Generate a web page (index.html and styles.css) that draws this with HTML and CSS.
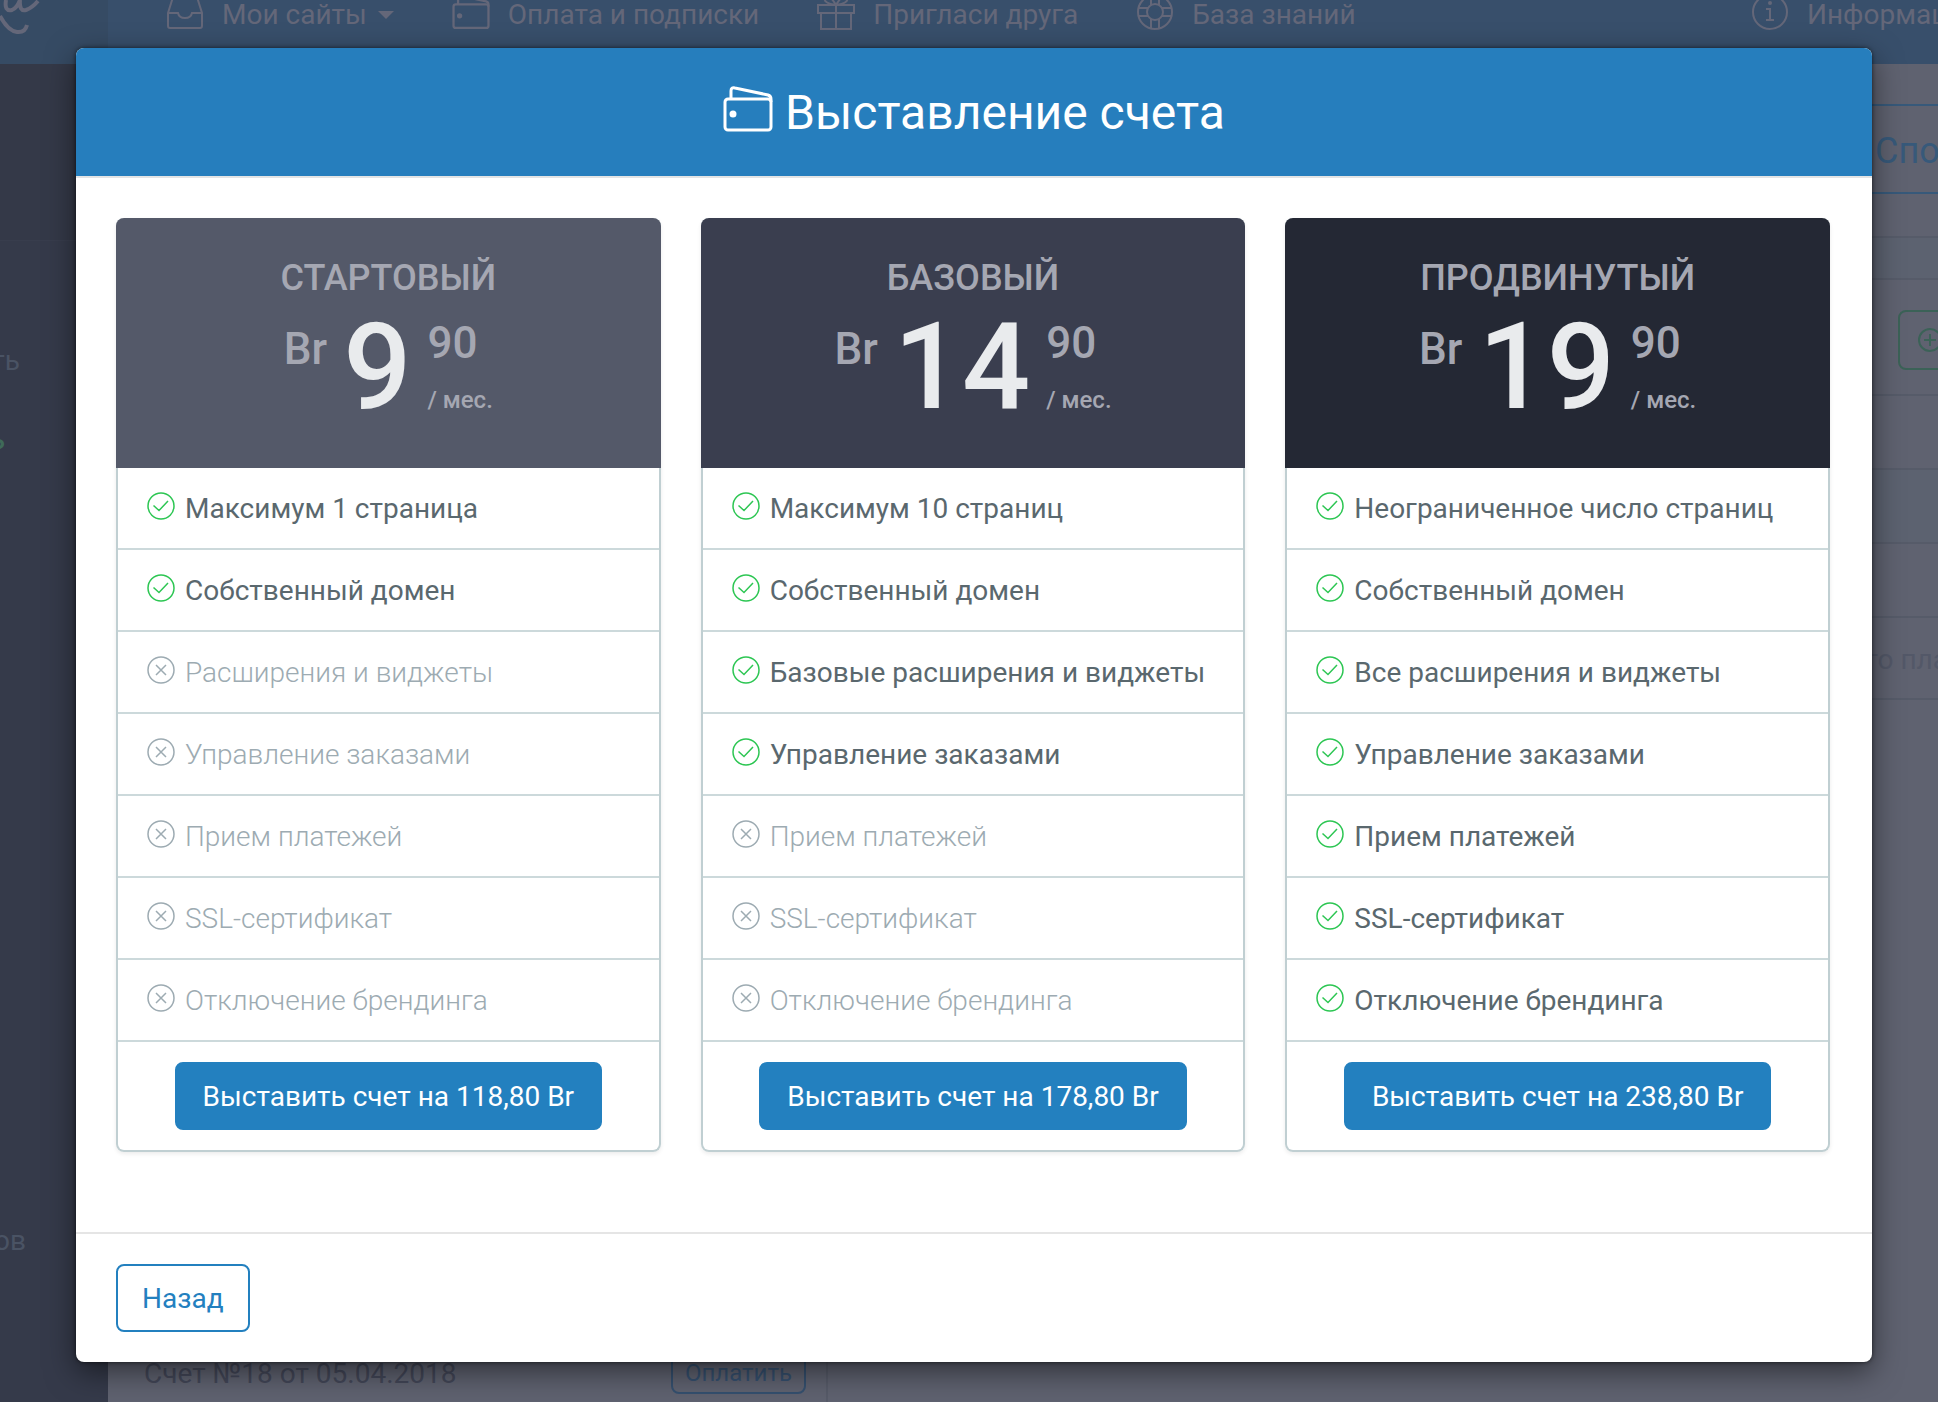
FILE: index.html
```html
<!DOCTYPE html>
<html lang="ru">
<head>
<meta charset="utf-8">
<title>Выставление счета</title>
<link rel="stylesheet" href="styles.css">
</head>
<body>
<svg class="sprite" aria-hidden="true">
  <symbol id="check" viewBox="0 0 28 28"><circle cx="14" cy="14" r="13"/><path d="M6.500 13.500l5.500 5L21 9"/></symbol>
  <symbol id="cross" viewBox="0 0 28 28"><circle cx="14" cy="14" r="13"/><path d="M9 9l10 10M19 9L9 19"/></symbol>
  <symbol id="wallet" viewBox="0 0 50 46"><rect x="2" y="13" width="46" height="31" rx="3"/><path d="M8 13V5q0-4 4-3L45 9q3 1 3 4v3"/><circle class="dot" cx="10" cy="28" r="2"/></symbol>
</svg>

<div class="page" aria-hidden="true">
  <header class="topbar">
    <div class="logo"><svg viewBox="0 0 108 64"><path d="M0 16q8 15 17 16q8 1 10-7M6 0q-2 12 6 10q5-2 8-10q-1 12 6 10q6-2 12-9"/></svg></div>
    <nav class="nav">
      <a href="#"><svg class="nav-icon" viewBox="0 0 38 36"><path d="M2 16L7 0h24l5 16v13q0 2-2 2H4q-2 0-2-2zh10q1 5 7 5t7-5h10"/></svg>Мои сайты<span class="caret"></span></a>
      <a href="#"><svg class="nav-icon wallet"><use href="#wallet"/></svg>Оплата и подписки</a>
      <a href="#"><svg class="nav-icon" viewBox="0 0 38 36"><path d="M1 8h36v8H1zM4 16v16h30V16M19 8v24M19 8Q6 6 8 1q4-5 11 7q7-12 11-7q2 5-11 7"/></svg>Пригласи друга</a>
      <a href="#"><svg class="nav-icon" viewBox="0 0 38 36"><circle cx="19" cy="15" r="17"/><circle cx="19" cy="15" r="8"/><path d="M15-2V8M23-2V8M15 22v10M23 22v10M2 11h10M2 19h10M26 11h10M26 19h10"/></svg>База знаний</a>
      <a class="info" href="#"><svg class="nav-icon" viewBox="0 0 38 36"><circle cx="19" cy="15" r="17"/><path d="M15 12h4v11M15 23h8"/><circle class="dot" cx="19" cy="6" r="1"/></svg>Информация</a>
    </nav>
  </header>
  <div class="workspace">
    <aside class="sidebar">
      <span class="side-top"></span>
      <span class="side-link">Создать</span>
      <span class="side-link side-active">Оплатить</span>
      <span class="side-link side-last">Заказов</span>
    </aside>
    <main class="invoices">
      <div class="invoice">Счет №18 от 05.04.2018</div>
      <button class="pay" type="button" tabindex="-1">Оплатить</button>
    </main>
    <section class="panel">
      <div class="tab">Способы</div>
      <div class="strip"></div>
      <div class="add"><button type="button" tabindex="-1"><svg viewBox="0 0 28 28"><circle cx="14" cy="14" r="11"/><path d="M14 8v12M8 14h12"/></svg></button></div>
      <div class="line"></div>
      <div class="line shade"></div>
      <div class="line"></div>
      <div class="line note">го платежа</div>
    </section>
  </div>
</div>

<div class="modal" role="dialog" aria-modal="true" aria-labelledby="title">
  <header class="modal-head">
    <svg class="title-icon"><use href="#wallet"/></svg>
    <h1 id="title">Выставление счета</h1>
  </header>
  <div class="plans">
    <section class="plan start">
      <header><h2>Стартовый</h2><div class="price"><span class="cur">Br</span><span class="whole">9</span><span class="part"><span class="cents">90</span><span class="per">/ мес.</span></span></div></header>
      <ul>
        <li><svg><use href="#check"/></svg>Максимум 1 страница</li>
        <li><svg><use href="#check"/></svg>Собственный домен</li>
        <li class="off"><svg><use href="#cross"/></svg>Расширения и виджеты</li>
        <li class="off"><svg><use href="#cross"/></svg>Управление заказами</li>
        <li class="off"><svg><use href="#cross"/></svg>Прием платежей</li>
        <li class="off"><svg><use href="#cross"/></svg>SSL-сертификат</li>
        <li class="off"><svg><use href="#cross"/></svg>Отключение брендинга</li>
      </ul>
      <footer><button class="btn btn-wide" type="button">Выставить счет на 118,80 Br</button></footer>
    </section>
    <section class="plan base">
      <header><h2>Базовый</h2><div class="price"><span class="cur">Br</span><span class="whole">14</span><span class="part"><span class="cents">90</span><span class="per">/ мес.</span></span></div></header>
      <ul>
        <li><svg><use href="#check"/></svg>Максимум 10 страниц</li>
        <li><svg><use href="#check"/></svg>Собственный домен</li>
        <li><svg><use href="#check"/></svg>Базовые расширения и виджеты</li>
        <li><svg><use href="#check"/></svg>Управление заказами</li>
        <li class="off"><svg><use href="#cross"/></svg>Прием платежей</li>
        <li class="off"><svg><use href="#cross"/></svg>SSL-сертификат</li>
        <li class="off"><svg><use href="#cross"/></svg>Отключение брендинга</li>
      </ul>
      <footer><button class="btn btn-wide" type="button">Выставить счет на 178,80 Br</button></footer>
    </section>
    <section class="plan pro">
      <header><h2>Продвинутый</h2><div class="price"><span class="cur">Br</span><span class="whole">19</span><span class="part"><span class="cents">90</span><span class="per">/ мес.</span></span></div></header>
      <ul>
        <li><svg><use href="#check"/></svg>Неограниченное число страниц</li>
        <li><svg><use href="#check"/></svg>Собственный домен</li>
        <li><svg><use href="#check"/></svg>Все расширения и виджеты</li>
        <li><svg><use href="#check"/></svg>Управление заказами</li>
        <li><svg><use href="#check"/></svg>Прием платежей</li>
        <li><svg><use href="#check"/></svg>SSL-сертификат</li>
        <li><svg><use href="#check"/></svg>Отключение брендинга</li>
      </ul>
      <footer><button class="btn btn-wide" type="button">Выставить счет на 238,80 Br</button></footer>
    </section>
  </div>
  <footer class="modal-foot"><button class="btn btn-outline" type="button">Назад</button></footer>
</div>
</body>
</html>
```
FILE: styles.css
```css
* { box-sizing: border-box; }
html, body { height: 100%; }
body { margin: 0; overflow: hidden; background: #5f6270; font: 400 28px/40px Roboto, sans-serif; }
svg { fill: none; stroke: currentColor; stroke-width: 2; flex: none; }
svg .dot { fill: currentColor; }
h1, h2, ul { margin: 0; padding: 0; }
ul { list-style: none; }
button { font: inherit; }
.sprite { position: absolute; width: 0; height: 0; }

/* Page under the dialog, already dimmed */
.page { display: flex; flex-direction: column; height: 100%; overflow: hidden; }
.topbar { display: flex; height: 64px; flex: none; background: #384f6b; color: #646779; }
.logo { width: 108px; flex: none; background: #364b64; }
.logo svg { display: block; width: 108px; height: 64px; stroke-width: 4; }
.nav { display: flex; flex: 1; align-items: flex-start; gap: 58px; padding-left: 58px; line-height: 30px; white-space: nowrap; }
.nav a { display: flex; align-items: center; flex: none; gap: 18px; color: inherit; text-decoration: none; }
.nav-icon { width: 38px; height: 36px; margin: -6px 0; overflow: visible; }
.nav .nav-icon { align-self: flex-start; margin-top: -3px; }
.nav .wallet { margin-top: -6px; stroke-width: 3; }
.caret { border: 8px solid transparent; border-top-color: currentColor; border-bottom: 0; margin-left: -7px; }
.nav .info { width: 187px; margin-left: auto; }
.workspace { display: flex; flex: 1; }
.sidebar { width: 108px; flex: none; display: flex; flex-direction: column; align-items: flex-start; background: #353a4a; color: #4a5364; }
.side-top { width: 100%; height: 177px; border-bottom: 1px solid #383d4d; background: #343948; }
.side-link { width: 20px; margin-top: 100px; display: flex; justify-content: flex-end; }
.side-active { width: 5px; margin-top: 39px; color: #3f6a59; font-weight: 500; }
.side-last { width: 26px; margin-top: 761px; }
.invoices { display: flex; align-items: flex-end; justify-content: space-between; flex: none; width: 720px; padding: 0 20px 8px 36px; border-right: 2px solid #575b69; color: #434758; }
.pay { height: 60px; padding: 18px 12px 0; border: 2px solid #35506f; border-radius: 8px; background: none; color: #35506f; font-size: 24px; line-height: 28px; }
.panel { flex: 1; min-width: 0; padding-top: 40px; }
.panel > * { padding-left: 1038px; white-space: nowrap; overflow: hidden; }
.tab { height: 90px; border: solid #37597a; border-width: 2px 0; font-size: 36px; line-height: 90px; color: #37597a; }
.panel .tab { padding-left: 1047px; }
.strip { height: 44px; margin-top: 42px; border: solid #565b69; border-width: 2px 0; background: #5c6270; }
.add { height: 116px; padding-top: 30px; border-bottom: 2px solid #565b69; }
.panel .add { padding-left: 1070px; }
.add button { width: 180px; height: 60px; padding: 0 16px; border: 2px solid #3b6257; border-radius: 8px; background: none; color: #3b6257; text-align: left; }
.add svg { display: block; width: 28px; height: 28px; }
.line { height: 74px; border-bottom: 2px solid #565b69; }
.shade { background: #5c6270; }
.note { height: 82px; line-height: 84px; color: #535868; }

/* Dialog */
.modal { position: absolute; top: 48px; left: 76px; right: 66px; border-radius: 8px; background: #fff; box-shadow: 0 10px 30px rgba(0, 0, 0, .5), 0 0 4px rgba(0, 0, 0, .6); overflow: hidden; }
.modal-head { display: flex; align-items: center; justify-content: center; gap: 12px; height: 130px; padding-top: 2px; border-bottom: 2px solid #e2e4e5; background: #267ebd; color: #fff; }
.title-icon { width: 50px; height: 46px; margin-bottom: 8px; stroke-width: 3; }
h1 { font-size: 48px; font-weight: 400; line-height: 60px; }
.plans { display: grid; grid-template-columns: repeat(3, 1fr); gap: 40px; padding: 40px 42px 80px 40px; }
.plan { border-radius: 8px; border: 2px solid #c0cfd2; border-top: 0; box-shadow: 0 2px 4px rgba(0, 0, 0, .08); }
.plan header { height: 250px; margin: 0 -2px; padding-top: 36px; border-radius: 8px 8px 0 0; text-align: center; color: #a5a7b2; font-weight: 500; }
.start header { background: #545969; }
.base header { background: #3a3e4f; }
.pro header { background: #242834; }
h2 { font-size: 36px; font-weight: 500; line-height: 48px; text-transform: uppercase; }
.price { display: flex; justify-content: center; margin-top: 1px; }
.cur { margin-top: 20px; font-size: 44px; line-height: 52px; }
.whole { margin: 0 16px; color: #e9ebed; font-size: 120px; line-height: 128px; }
.part { display: flex; flex-direction: column; text-align: left; }
.cents { margin-top: 14px; font-size: 44px; line-height: 52px; }
.per { margin-top: 15px; font-size: 24px; line-height: 32px; }
.plan li { display: flex; align-items: center; gap: 10px; height: 82px; padding: 2px 0 0 29px; border-bottom: 2px solid #ccd9db; color: #5a686e; white-space: nowrap; }
.plan li svg { width: 28px; height: 28px; margin-bottom: 6px; color: #2dc653; stroke-width: 1.5; }
.plan .off { color: #9dabb2; font-weight: 300; }
.plan .off svg { color: #9dabb2; }
.plan footer { display: flex; justify-content: center; padding: 20px; }
.btn { height: 68px; padding: 2px 24px 0; border: 2px solid #2380bf; border-radius: 8px; background: #2380bf; color: #fff; }
.btn-wide { padding: 2px 26px 0; }
.btn-outline { background: #fff; color: #2380bf; }
.modal-foot { padding: 30px 40px; border-top: 2px solid #e5e5e5; }
```
